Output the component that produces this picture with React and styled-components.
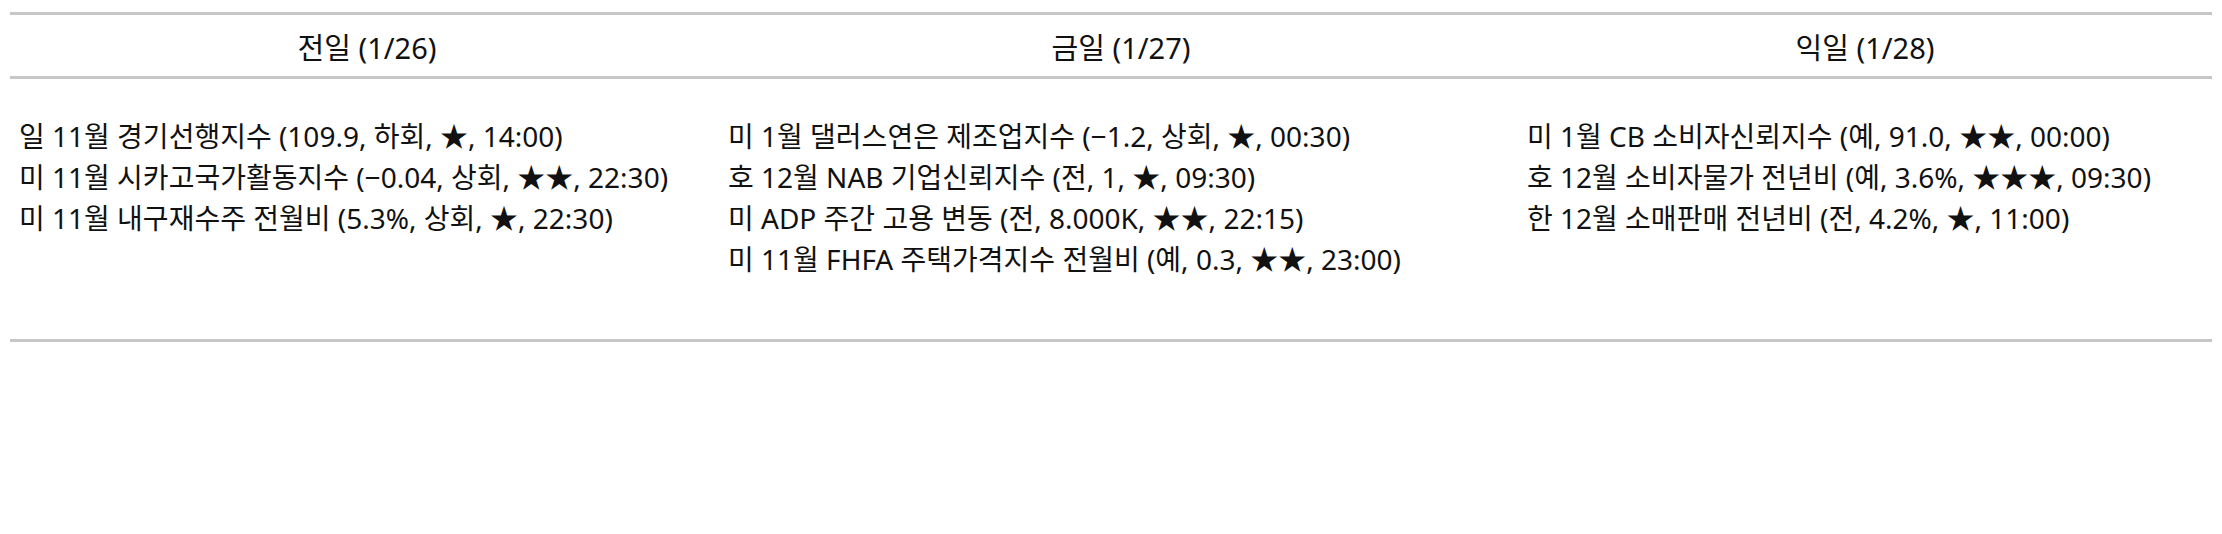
import React from "react";
import styled, { createGlobalStyle } from "styled-components";

const GlobalStyle = createGlobalStyle`
  body {
    margin: 0;
    background: #fff;
    color: #111;
    font-family: "Noto Sans", "Noto Sans CJK KR", sans-serif;
  }
`;

const columns = [
  {
    title: "전일 (1/26)",
    pad: 9,
    items: [
      "일 11월 경기선행지수 (109.9, 하회, ★, 14:00)",
      "미 11월 시카고국가활동지수 (−0.04, 상회, ★★, 22:30)",
      "미 11월 내구재수주 전월비 (5.3%, 상회, ★, 22:30)",
    ],
  },
  {
    title: "금일 (1/27)",
    pad: 4,
    items: [
      "미 1월 댈러스연은 제조업지수 (−1.2, 상회, ★, 00:30)",
      "호 12월 NAB 기업신뢰지수 (전, 1, ★, 09:30)",
      "미 ADP 주간 고용 변동 (전, 8.000K, ★★, 22:15)",
      "미 11월 FHFA 주택가격지수 전월비 (예, 0.3, ★★, 23:00)",
    ],
  },
  {
    title: "익일 (1/28)",
    pad: 9,
    items: [
      "미 1월 CB 소비자신뢰지수 (예, 91.0, ★★, 00:00)",
      "호 12월 소비자물가 전년비 (예, 3.6%, ★★★, 09:30)",
      "한 12월 소매판매 전년비 (전, 4.2%, ★, 11:00)",
    ],
  },
];

const Page = styled.div`
  padding: 12px 10px 0 10px;
`;

const Table = styled.div`
  width: 2202px;
  border-top: 3px solid #c6c6c6;
  border-bottom: 3px solid #c6c6c6;
`;

const Row = styled.div`
  display: grid;
  grid-template-columns: 714px 794px 694px;
`;

const HeaderRow = styled(Row)`
  height: 61px;
  border-bottom: 3px solid #c6c6c6;
`;

const HeadCell = styled.div`
  display: flex;
  align-items: center;
  justify-content: center;
  font-size: 29px;
  color: #111;
`;

const BodyCell = styled.div`
  display: flex;
  flex-direction: column;
  padding: 37px 0 59px ${(p) => p.$pad}px;
`;

const Item = styled.div`
  font-size: 28px;
  line-height: 41px;
  white-space: nowrap;
  color: #111;
`;

export default function App() {
  return (
    <>
      <GlobalStyle />
      <Page>
        <Table>
          <HeaderRow>
            {columns.map((c) => (
              <HeadCell key={c.title}>{c.title}</HeadCell>
            ))}
          </HeaderRow>
          <Row>
            {columns.map((c) => (
              <BodyCell key={c.title} $pad={c.pad}>
                {c.items.map((t) => (
                  <Item key={t}>{t}</Item>
                ))}
              </BodyCell>
            ))}
          </Row>
        </Table>
      </Page>
    </>
  );
}
